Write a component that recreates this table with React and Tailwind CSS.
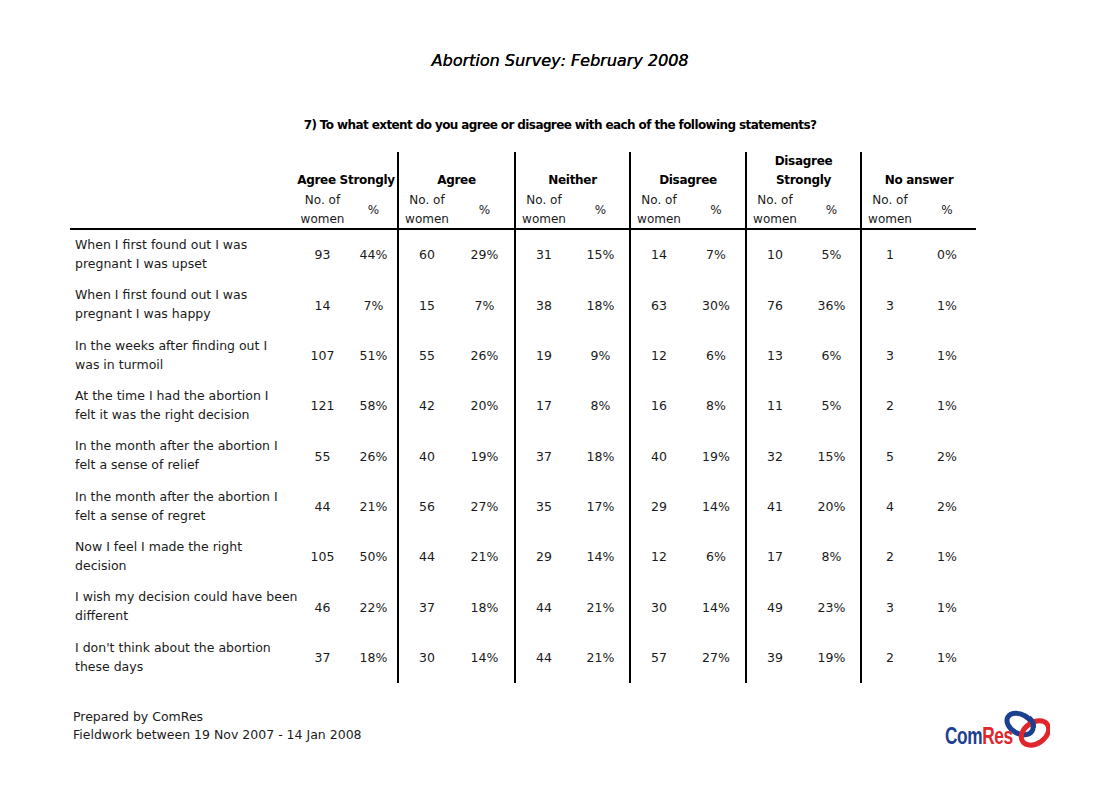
import React from "react";

const rows = [
  [["When I first found out I was", "pregnant I was upset"], "93", "44%", "60", "29%", "31", "15%", "14", "7%", "10", "5%", "1", "0%"],
  [["When I first found out I was", "pregnant I was happy"], "14", "7%", "15", "7%", "38", "18%", "63", "30%", "76", "36%", "3", "1%"],
  [["In the weeks after finding out I", "was in turmoil"], "107", "51%", "55", "26%", "19", "9%", "12", "6%", "13", "6%", "3", "1%"],
  [["At the time I had the abortion I", "felt it was the right decision"], "121", "58%", "42", "20%", "17", "8%", "16", "8%", "11", "5%", "2", "1%"],
  [["In the month after the abortion I", "felt a sense of relief"], "55", "26%", "40", "19%", "37", "18%", "40", "19%", "32", "15%", "5", "2%"],
  [["In the month after the abortion I", "felt a sense of regret"], "44", "21%", "56", "27%", "35", "17%", "29", "14%", "41", "20%", "4", "2%"],
  [["Now I feel I made the right", "decision"], "105", "50%", "44", "21%", "29", "14%", "12", "6%", "17", "8%", "2", "1%"],
  [["I wish my decision could have been", "different"], "46", "22%", "37", "18%", "44", "21%", "30", "14%", "49", "23%", "3", "1%"],
  [["I don't think about the abortion", "these days"], "37", "18%", "30", "14%", "44", "21%", "57", "27%", "39", "19%", "2", "1%"],
];

const groups = [
  { title: ["Agree Strongly"], line: false },
  { title: ["Agree"], line: true },
  { title: ["Neither"], line: true },
  { title: ["Disagree"], line: true },
  { title: ["Disagree", "Strongly"], line: true },
  { title: ["No answer"], line: true },
];

const GRID =
  "grid grid-cols-[225px_55px_47px_58px_59px_58px_57px_58px_58px_58px_57px_58px_58px]";

export default function App() {
  return (
    <div className="w-[1120px] h-[790px] bg-white text-[#1a1a1a] font-['DejaVu_Sans',Verdana,sans-serif] overflow-hidden">
      <div className="pt-[50px] text-center text-[16px] leading-[22px] italic text-black [text-shadow:0.3px_0_0_#000]">
        Abortion Survey: February 2008
      </div>
      <div className="mt-[45px] text-center text-[12px] leading-[16px] font-bold text-black tracking-[-0.6px]">
        7) To what extent do you agree or disagree with each of the following statements?
      </div>

      <div className="ml-[70px] mt-[19px] w-[906px]">
        {/* group titles */}
        <div className={`${GRID} h-[38px]`}>
          <div />
          {groups.map((g, i) => (
            <div
              key={i}
              className={`col-span-2 flex flex-col justify-end items-center pb-[1px] text-[12px] leading-[19px] font-bold text-black tracking-[-0.3px] ${
                g.line ? "border-l-2 border-black" : ""
              }`}
            >
              {g.title.map((t, j) => (
                <div key={j}>{t}</div>
              ))}
            </div>
          ))}
        </div>
        {/* sub headers */}
        <div className={`${GRID} h-[38px]`}>
          <div />
          {groups.map((g, i) => (
            <React.Fragment key={i}>
              <div
                className={`flex flex-col items-center justify-start pt-[1px] text-[12px] leading-[19px] ${
                  g.line ? "border-l-2 border-black" : ""
                }`}
              >
                <div>No. of</div>
                <div>women</div>
              </div>
              <div className="flex items-center justify-center pt-[2px] text-[12px] leading-[19px]">%</div>
            </React.Fragment>
          ))}
        </div>
        <div className="h-[2px] bg-black" />
        {rows.map((r, ri) => (
          <div key={ri} className={`${GRID} h-[50.33px]`}>
            <div className="pl-[5px] flex flex-col justify-center text-[12.5px] leading-[19px] pb-[2px] whitespace-nowrap">
              <div>{r[0][0]}</div>
              <div>{r[0][1]}</div>
            </div>
            {r.slice(1).map((v, ci) => (
              <div
                key={ci}
                className={`flex items-center justify-center pt-[1px] text-[12.5px] ${
                  ci % 2 === 0 && ci > 0 ? "border-l-2 border-black" : ""
                }`}
              >
                {v}
              </div>
            ))}
          </div>
        ))}
      </div>

      <div className="flex justify-between items-start mt-[25px] pl-[73px] pr-[70px]">
        <div className="text-[12.5px] leading-[18px]">
          <div>Prepared by ComRes</div>
          <div>Fieldwork between 19 Nov 2007 - 14 Jan 2008</div>
        </div>
        <div className="relative w-[110px] h-[46px] -mt-[4px]">
          <svg className="absolute left-0 top-0" width="110" height="46" viewBox="0 0 110 46">
            <ellipse cx="80" cy="20" rx="14" ry="9.5" fill="none" stroke="#1c3f8f" strokeWidth="5" transform="rotate(30 80 20)" />
            <ellipse cx="95" cy="29" rx="15" ry="10.5" fill="none" stroke="#e1262b" strokeWidth="5" transform="rotate(-35 95 29)" />
            <path d="M 89 13.5 A 14 9.5 30 0 1 93.5 23.5" fill="none" stroke="#1c3f8f" strokeWidth="5" />
          </svg>
          <div className="absolute left-[5px] top-[19px] origin-left scale-x-[0.75] font-['Liberation_Sans',Arial,sans-serif] font-bold text-[23px] leading-[26px] tracking-[-0.5px] whitespace-nowrap">
            <span className="text-[#1c3f8f]">Com</span>
            <span className="text-[#e1262b]">Res</span>
          </div>
        </div>
      </div>
    </div>
  );
}
